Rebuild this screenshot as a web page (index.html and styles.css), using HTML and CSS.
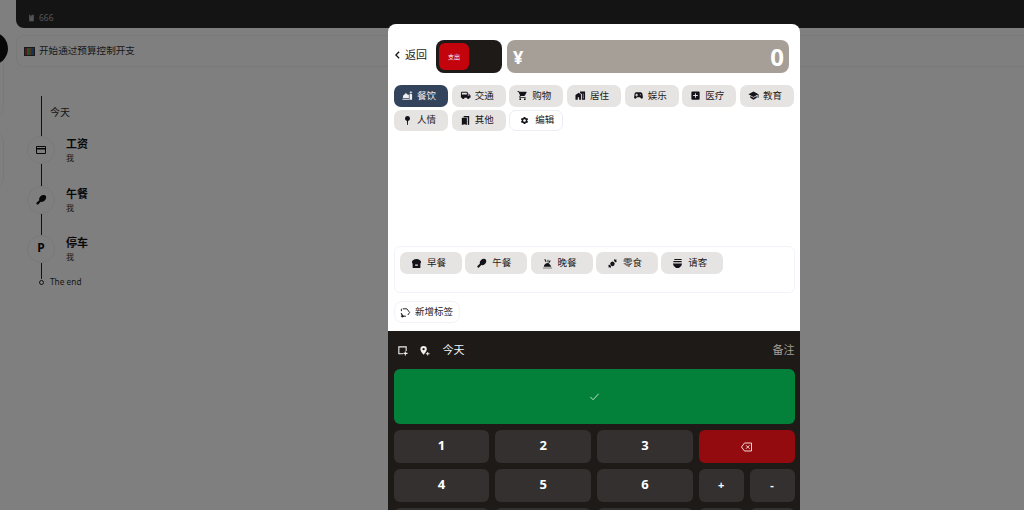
FILE: index.html
```html
<!DOCTYPE html>
<html lang="zh">
<head>
<meta charset="utf-8">
<title>记账</title>
<link rel="stylesheet" href="styles.css">
</head>
<body>
<svg class="sprite" width="0" height="0">
  <symbol id="i-food" viewBox="0 0 24 24"><path d="M1 19h15v2H1zM2 17.500v-2a7 7 0 0 1 5-6.700V7h3v1.800c1.100.3 2 .8 2.800 1.500H15V17.500z"/><path d="M16.500 21V9l2.500-1V6l-3 .5L19.500 2 23 6.500l-3-.5v2.500L22 9.500V21z"/></symbol>
  <symbol id="i-bus" viewBox="0 0 24 24"><path fill-rule="evenodd" d="M2 6a2 2 0 0 1 2-2h11a2 2 0 0 1 2 2v2h2.500L23 12v5h-2.200a2.800 2.800 0 0 1-5.600 0H9.800a2.800 2.800 0 0 1-5.600 0H2zm2 0v4h11V6zm13 4v2h4l-1.500-2z"/></symbol>
  <symbol id="i-cart" viewBox="0 0 24 24"><path d="M7 18c-1.100 0-1.990.9-1.990 2S5.900 22 7 22s2-.9 2-2-.9-2-2-2zM1 2v2h2l3.600 7.590-1.350 2.450c-.16.28-.25.61-.25.96 0 1.100.9 2 2 2h12v-2H7.420c-.14 0-.25-.11-.25-.25l.03-.12.9-1.630h7.450c.75 0 1.410-.41 1.750-1.030l3.580-6.490A1 1 0 0 0 20 4H5.210l-.94-2H1zm16 16c-1.100 0-1.990.9-1.990 2s.89 2 1.990 2 2-.9 2-2-.9-2-2-2z"/></symbol>
  <symbol id="i-house" viewBox="0 0 24 24"><path fill-rule="evenodd" d="M1 21V11l7-5 5 3.600V21H9v-5H6v5zM11 7V3h11v18h-7V8.500zm6 1v2h2V8zm0 4v2h2v-2zm0 4v2h2v-2z"/></symbol>
  <symbol id="i-game" viewBox="0 0 24 24"><path fill-rule="evenodd" d="M21.580 16.090l-1.090-7.660A3.996 3.996 0 0 0 16.530 5H7.470C5.480 5 3.790 6.460 3.510 8.430l-1.090 7.660C2.200 17.630 3.390 19 4.940 19c.68 0 1.320-.27 1.800-.75L9 16h6l2.250 2.250c.48.48 1.130.75 1.800.75 1.560 0 2.750-1.370 2.530-2.910zM7 8h2v2h2v2H9v2H7v-2H5v-2h2zm9 1a1.200 1.200 0 1 1 0 2.400A1.200 1.200 0 0 1 16 9z"/></symbol>
  <symbol id="i-med" viewBox="0 0 24 24"><path d="M19 3H5a2 2 0 0 0-2 2v14a2 2 0 0 0 2 2h14a2 2 0 0 0 2-2V5a2 2 0 0 0-2-2zm-2 10h-4v4h-2v-4H7v-2h4V7h2v4h4v2z"/></symbol>
  <symbol id="i-school" viewBox="0 0 24 24"><path d="M5 13.180v4L12 21l7-3.820v-4L12 17l-7-3.820zM12 3L1 9l11 6 9-4.910V17h2V9L12 3z"/></symbol>
  <symbol id="i-pin" viewBox="0 0 24 24"><path d="M12 2a5.500 5.500 0 0 1 1.200 10.870L12.800 22h-1.600l-.4-9.130A5.500 5.500 0 0 1 12 2z"/></symbol>
  <symbol id="i-book" viewBox="0 0 24 24"><path d="M8 2h12v20l-3-1V5H8zM4 6h11v16l-5.500-2L4 22z"/></symbol>
  <symbol id="i-gear" viewBox="0 0 24 24"><path d="M19.140 12.940c.04-.3.06-.61.06-.94 0-.32-.02-.64-.07-.94l2.030-1.580a.49.49 0 0 0 .12-.61l-1.920-3.320a.488.488 0 0 0-.59-.22l-2.390.96c-.5-.38-1.030-.7-1.620-.94l-.36-2.540a.484.484 0 0 0-.48-.41h-3.840c-.24 0-.43.17-.47.41l-.36 2.540c-.59.24-1.130.57-1.620.94l-2.390-.96c-.22-.08-.47 0-.59.22L2.740 8.870c-.12.21-.08.47.12.61l2.030 1.580c-.05.3-.09.63-.09.94s.02.64.07.94l-2.030 1.580a.49.49 0 0 0-.12.61l1.920 3.320c.12.22.37.29.59.22l2.390-.96c.5.38 1.030.7 1.620.94l.36 2.540c.05.24.24.41.48.41h3.840c.24 0 .44-.17.47-.41l.36-2.540c.59-.24 1.130-.56 1.620-.94l2.390.96c.22.08.47 0 .59-.22l1.920-3.320c.12-.22.07-.47-.12-.61l-2.010-1.580zM12 15.600c-1.980 0-3.600-1.620-3.600-3.600s1.620-3.600 3.600-3.600 3.600 1.620 3.600 3.600-1.620 3.600-3.600 3.600z"/></symbol>
  <symbol id="i-break" viewBox="0 0 24 24"><path fill-rule="evenodd" d="M12 2c5.500 0 10 3 10 7 0 1.300-.7 2.200-1.500 2.800V20a2 2 0 0 1-2 2h-13a2 2 0 0 1-2-2v-8.200C2.700 11.200 2 10.300 2 9c0-4 4.500-7 10-7zm-3 12v3h6v-3z"/></symbol>
  <symbol id="i-drum" viewBox="0 0 24 24"><path d="M21 3c2.500 2.500 1.500 7-1.500 10-2.500 2.500-5.500 3.300-7.800 2.500L8.500 18.700l-.6.6a2.600 2.600 0 1 1-3.200-3.200l.6-.6 3.200-3.200c-.8-2.300 0-5.300 2.500-7.800 3-3 8-3.500 10.500-1.500z"/></symbol>
  <symbol id="i-dinner" viewBox="0 0 24 24"><path d="M2 21h20v1.500H2zM4 19a8 8 0 0 1 11-7.400L17 14a8 8 0 0 1 3 5zM5 3l2-1 3 6-2 1zM12 4h2v5h-2zM17 5l2 1-3 5-2-1z"/></symbol>
  <symbol id="i-candy" viewBox="0 0 24 24"><path d="M8.500 9.500a4.800 4.800 0 0 1 6.800 6.800 4.800 4.800 0 0 1-6.800-6.800zM15 5l1.500-3 1.500 2 3-.5L20 7l2 1.500-4.500 1zM9 19l-1.500 3L6 20l-3 .5L4 17l-2-1.500 4.500-1z"/></symbol>
  <symbol id="i-bowl" viewBox="0 0 24 24"><path d="M5 2h16v2.500H5zM3 6.500h18V9H3zM2 12h20a10 10 0 0 1-6 8.500V22H8v-1.500A10 10 0 0 1 2 12z"/></symbol>
  <symbol id="i-label" viewBox="0 0 24 24"><path fill="none" stroke="currentColor" stroke-width="2" d="M6 4h9l6 8-4 5.500M3 9V5a1 1 0 0 1 1-1M3 13v3l3 4h7"/><path d="M2 19h2v-3h2v3h3v2H6v2H4v-2H2z"/></symbol>
  <symbol id="i-card" viewBox="0 0 24 24"><path fill-rule="evenodd" d="M4 4h16a2 2 0 0 1 2 2v12a2 2 0 0 1-2 2H4a2 2 0 0 1-2-2V6a2 2 0 0 1 2-2zm0 2v2h16V6zm0 5v7h16v-7z"/></symbol>
</svg>

<div class="app">
  <div class="hero"><svg class="hero-icon" viewBox="0 0 24 24"><path d="M4 1h4v5h2V1h2v5h2V1h6v22H4z"/></svg><span>666</span></div>
  <div class="budget"><span class="budget-icon"></span><span>开始通过预算控制开支</span></div>
  <div class="timeline">
    <div class="tl-row">
      <div class="tl-axis tl-axis-narrow"><i class="tl-line tl-h40"></i></div>
      <div class="tl-today">今天</div>
    </div>
    <div class="tl-row">
      <div class="tl-axis"><span class="tl-dot"><svg class="ic-tl"><use href="#i-card"/></svg></span><i class="tl-line tl-h22"></i></div>
      <div class="tl-body"><b>工资</b><small>我</small></div>
    </div>
    <div class="tl-row">
      <div class="tl-axis"><span class="tl-dot"><svg class="ic-tl"><use href="#i-drum"/></svg></span><i class="tl-line tl-h21"></i></div>
      <div class="tl-body"><b>午餐</b><small>我</small></div>
    </div>
    <div class="tl-row">
      <div class="tl-axis"><span class="tl-dot tl-p">P</span><i class="tl-line tl-h16"></i></div>
      <div class="tl-body"><b>停车</b><small>我</small></div>
    </div>
    <div class="tl-end-row"><i class="tl-ring"></i><span>The end</span></div>
  </div>
</div>

<span class="fab"></span>
<span class="side-arc"></span>
<span class="side-arc side-arc-2"></span>

<div class="overlay">
  <div class="modal">
    <div class="m-head">
      <button class="back"><svg class="back-ic" viewBox="6 2 12 20"><path d="M16 4l-8 8 8 8" fill="none" stroke="currentColor" stroke-width="3.600"/></svg>返回</button>
      <div class="toggle"><span class="toggle-on">支出</span></div>
      <div class="amount"><span class="yen">¥</span><span class="zero">0</span></div>
    </div>
    <div class="tabs">
      <div class="tab tab-active"><svg class="ic"><use href="#i-food"/></svg>餐饮</div>
      <div class="tab"><svg class="ic"><use href="#i-bus"/></svg>交通</div>
      <div class="tab"><svg class="ic"><use href="#i-cart"/></svg>购物</div>
      <div class="tab"><svg class="ic"><use href="#i-house"/></svg>居住</div>
      <div class="tab"><svg class="ic"><use href="#i-game"/></svg>娱乐</div>
      <div class="tab"><svg class="ic"><use href="#i-med"/></svg>医疗</div>
      <div class="tab"><svg class="ic"><use href="#i-school"/></svg>教育</div>
      <div class="tab"><svg class="ic"><use href="#i-pin"/></svg>人情</div>
      <div class="tab"><svg class="ic"><use href="#i-book"/></svg>其他</div>
      <div class="tab tab-edit"><svg class="ic ic-gear"><use href="#i-gear"/></svg>编辑</div>
    </div>
    <div class="subs">
      <div class="chip"><svg class="ic"><use href="#i-break"/></svg>早餐</div>
      <div class="chip"><svg class="ic"><use href="#i-drum"/></svg>午餐</div>
      <div class="chip"><svg class="ic"><use href="#i-dinner"/></svg>晚餐</div>
      <div class="chip"><svg class="ic"><use href="#i-candy"/></svg>零食</div>
      <div class="chip"><svg class="ic"><use href="#i-bowl"/></svg>请客</div>
    </div>
    <div class="add-row"><div class="add"><svg class="ic ic-add"><use href="#i-label"/></svg>新增标签</div></div>
    <div class="pad">
      <div class="pad-top">
        <svg class="pad-ic" viewBox="0 0 24 24"><path fill="none" stroke="currentColor" stroke-width="2.400" d="M13 19H4V4h16v9"/><path d="M17 14h2.400v3H23v2.400h-3.600V23H17v-3.600h-3V17h3z"/></svg>
        <svg class="pad-ic pad-ic-2" viewBox="0 0 24 24"><path fill-rule="evenodd" d="M10 2a7 7 0 0 1 7 7c0 4.500-7 12-7 12S3 13.500 3 9a7 7 0 0 1 7-7zm0 4.500a2.500 2.500 0 1 0 0 5 2.500 2.500 0 0 0 0-5z"/><path d="M18 15h2v3h3v2h-3v3h-2v-3h-3v-2h3z"/></svg>
        <span class="pad-date">今天</span>
        <span class="pad-note">备注</span>
      </div>
      <button class="ok"><svg class="ok-ic" viewBox="0 0 24 24"><path d="M3 13l6 6L21 6" fill="none" stroke="currentColor" stroke-width="1.800"/></svg></button>
      <div class="keys">
        <button class="key">1</button>
        <button class="key">2</button>
        <button class="key">3</button>
        <button class="key key-del"><svg class="del-ic" viewBox="0 0 24 24"><path fill="none" stroke="currentColor" stroke-width="2" d="M8 4h14v16H8l-6-8zM11 8.500l7 7M18 8.500l-7 7"/></svg></button>
        <button class="key">4</button>
        <button class="key">5</button>
        <button class="key">6</button>
        <div class="key-split"><button class="key key-op">+</button><button class="key key-op">-</button></div>
        <button class="key">7</button>
        <button class="key">8</button>
        <button class="key">9</button>
        <div class="key-split"><button class="key key-op">×</button><button class="key key-op">÷</button></div>
      </div>
    </div>
  </div>
</div>
</body>
</html>
```

FILE: styles.css
```css
* { box-sizing: border-box; }
html, body { margin: 0; height: 510px; overflow: hidden; background: #fff; }
body { font-family: "Noto Sans", "Noto Sans CJK SC", sans-serif; color: #1e1a17; }
.sprite { position: absolute; }
svg { fill: currentColor; display: block; flex: none; }
button { font-family: inherit; border: 0; padding: 0; margin: 0; }

.app { padding-left: 16px; height: 510px; }
.hero { height: 28px; background: #2b2928; border-bottom-left-radius: 8px; color: #a8a8a8; font-size: 8.500px; line-height: 12px; display: flex; align-items: center; gap: 4px; padding: 8px 0 0 12px; }
.hero-icon { width: 7px; height: 8px; }
.budget { margin-top: 7px; height: 32px; border: 1px solid #f3f3f3; border-right: 0; border-radius: 8px 0 0 8px; display: flex; align-items: center; gap: 4px; padding-left: 7px; font-size: 9.600px; line-height: 14px; color: #333; }
.budget-icon { width: 11px; height: 9px; background: repeating-linear-gradient(90deg, #a33 0 2px, #3a6 2px 4px, #a63 4px 6px, #36a 6px 8px); border: 1px solid #333; }

.timeline { margin-top: 29px; padding-left: 11px; }
.tl-row { display: flex; }
.tl-axis { width: 28px; display: flex; flex-direction: column; align-items: center; }
.tl-axis-narrow { width: 18px; margin-left: 5px; }
.tl-line { display: block; width: 1px; background: #222; }
.tl-h40 { height: 40px; }
.tl-h22 { height: 22px; }
.tl-h21 { height: 21px; }
.tl-h16 { height: 16px; }
.tl-dot { width: 28px; height: 28px; border: 1px solid #f1f1f1; border-radius: 50%; display: flex; align-items: center; justify-content: center; color: #111; }
.ic-tl { width: 12px; height: 12px; }
.tl-p { font-size: 12px; font-weight: 700; line-height: 1; padding-bottom: 2px; }
.tl-today { font-size: 10px; line-height: 14px; color: #333; padding-top: 9px; }
.tl-body { margin-left: 11px; padding-top: 1px; }
.tl-body b { display: block; font-size: 11px; line-height: 14px; font-weight: 700; color: #111; margin-bottom: 1px; }
.tl-body small { display: block; font-size: 8px; line-height: 11px; color: #333; }
.tl-end-row { display: flex; align-items: center; font-size: 8.300px; line-height: 12px; color: #333; padding-left: 12px; height: 6px; gap: 6px; }
.tl-ring { display: block; width: 5px; height: 5px; border: 1px solid #222; border-radius: 50%; }

.fab { position: absolute; left: -25px; top: 32px; width: 33px; height: 33px; border-radius: 50%; background: #111; z-index: 1; }
.side-arc { position: absolute; left: -20px; top: 50px; width: 24px; height: 66px; border: 1px solid #f2f2f2; border-radius: 0 0 8px 0; }
.side-arc-2 { top: 130px; height: 60px; border-radius: 0 12px 12px 0; }

.overlay { position: fixed; inset: 0; background: rgba(0, 0, 0, 0.5); overflow: hidden; z-index: 2; }
.modal { position: absolute; left: 388px; top: 24px; width: 412px; background: #fff; border-radius: 8px 8px 0 0; padding-top: 16px; }

.m-head { display: flex; align-items: center; height: 33px; padding: 0 11px 0 7px; }
.back { display: flex; align-items: center; gap: 5px; background: none; color: #1e1a17; font-size: 11px; line-height: 16px; width: 41px; margin-bottom: 3px; }
.back-ic { width: 5px; height: 8px; }
.toggle { width: 66px; height: 33px; background: #1e1a17; border-radius: 8px; padding: 3px; flex: none; }
.toggle-on { display: flex; align-items: center; justify-content: center; width: 30px; height: 27px; background: #c4040c; border-radius: 6px; color: #fff; font-size: 6px; line-height: 8px; }
.amount { flex: 1; margin-left: 5px; height: 33px; background: #a59f98; border-radius: 8px; display: flex; align-items: center; justify-content: space-between; padding: 0 5px 0 6px; color: #fff; font-weight: 700; }
.yen { font-size: 18px; line-height: 24px; }
.zero { font-size: 24px; line-height: 30px; }

.tabs { margin-top: 12px; height: 161px; padding: 0 6px; display: grid; grid-template-columns: repeat(7, 54px); grid-auto-rows: 21.500px; gap: 3px 3.670px; align-content: start; }
.tab, .chip, .add { display: flex; align-items: center; font-size: 9.500px; line-height: 12px; border-radius: 7px; color: #1e1a17; }
.tab { background: #e6e4e2; padding-left: 8px; gap: 4px; }
.tab-active { background: #33435c; color: #f0f0f0; }
.tab-edit { background: #fff; border: 1px solid #eceef6; padding-left: 10px; gap: 6px; }
.ic { width: 11px; height: 11px; color: #15131a; }
.ic-gear { width: 9px; height: 9px; }
.tab-active .ic { color: #f0f0f0; }

.subs { margin: 0 5px 0 6px; height: 47px; border: 1px solid #f1f3fa; border-radius: 6px; padding: 5px; display: flex; gap: 3.300px; align-items: flex-start; }
.chip { width: 62px; height: 22px; background: #e6e4e2; padding-left: 11px; gap: 5px; }

.add-row { padding: 8px 6px; }
.add { width: 66px; height: 22px; border: 1px solid #f1f3fa; border-radius: 8px; gap: 4px; padding-left: 5px; }

.pad { background: #1e1a17; padding: 0 5.500px 8px; }
.pad-top { height: 38px; display: flex; align-items: center; color: #fff; font-size: 11px; line-height: 16px; padding-left: 3px; }
.pad-ic { width: 11px; height: 11px; color: #f0f0f0; }
.pad-ic-2 { margin-left: 11px; }
.pad-date { margin-left: 13px; color: #f5f5f5; }
.pad-note { margin-left: auto; color: #a59f98; }
.ok { display: flex; align-items: center; justify-content: center; width: 100%; height: 55px; background: #03803a; border-radius: 6px; color: #e8f5ec; }
.ok-ic { width: 11px; height: 11px; }
.keys { margin-top: 6px; display: grid; grid-template-columns: repeat(4, 1fr); grid-auto-rows: 33px; gap: 6px; }
.key { background: #34302f; color: #fff; border-radius: 6px; font-size: 13px; font-weight: 700; line-height: 18px; display: flex; align-items: center; justify-content: center; padding-bottom: 3px; }
.key-del { background: #930a0f; padding-bottom: 0; }
.del-ic { width: 13px; height: 12px; color: #f3d9d9; }
.key-split { display: grid; grid-template-columns: 1fr 1fr; gap: 6px; }
.key-op { font-size: 11px; padding-bottom: 1px; }
```
